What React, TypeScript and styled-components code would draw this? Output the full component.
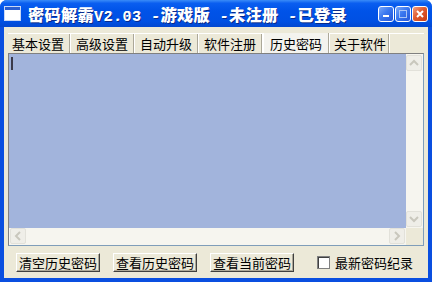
import React from "react";
import styled, { createGlobalStyle } from "styled-components";

const GlobalStyle = createGlobalStyle`
  html, body { margin: 0; padding: 0; background: #ffffff; }
  body { font-family: "Noto Sans CJK SC", "Liberation Sans", sans-serif; }
  * { box-sizing: border-box; }
`;

const Window = styled.div`
  width: 432px;
  height: 282px;
  display: flex;
  flex-direction: column;
  background: #0a4fe0;
  border-radius: 7px 7px 0 0;
  overflow: hidden;
`;

const TitleBar = styled.div`
  height: 27px;
  flex: none;
  display: flex;
  align-items: center;
  padding: 0 4px 0 5px;
  background: linear-gradient(
    to bottom,
    #3a8cf8 0%,
    #0a5ef0 12%,
    #0053e8 40%,
    #0050e3 80%,
    #0348d0 100%
  );
`;

const AppIcon = styled.div`
  width: 15px;
  height: 13px;
  background: #ffffff;
  border-top: 3px solid #2b5fd0;
  box-shadow: 0 0 0 1px #c9d8f5;
  margin-right: 8px;
  flex: none;
`;

const TitleText = styled.div`
  flex: 1;
  color: #ffffff;
  font-family: "Noto Sans CJK SC", "Liberation Mono", serif;
  font-weight: 900;
  font-size: 16px;
  letter-spacing: 0.5px;
  white-space: nowrap;
  text-shadow: 1px 1px 0 #0a2a8a, 0.4px 0 0 #ffffff;
`;

const Latin = styled.span`
  font-family: "Liberation Mono", monospace;
  font-size: 15px;
`;

const CaptionButtons = styled.div`
  display: flex;
  gap: 1px;
`;

const CapBtn = styled.div<{ $close?: boolean }>`
  width: 16px;
  height: 16px;
  border: 1px solid #ffffff;
  border-radius: 3px;
  background: ${(p) =>
    p.$close
      ? "linear-gradient(135deg, #f0a080 0%, #e05a30 45%, #c83c10 100%)"
      : "linear-gradient(135deg, #7aa8f8 0%, #3a78f0 45%, #2456d8 100%)"};
  display: flex;
  align-items: center;
  justify-content: center;
`;

const Frame = styled.div`
  flex: 1;
  display: flex;
  flex-direction: column;
  margin: 0 4px 4px 4px;
  background: #ece9d8;
  padding: 6px 4px 0 4px;
`;

const TabRow = styled.div`
  display: flex;
  height: 20px;
  padding-left: 1px;
  border-top: 1px solid #ffffff;
`;

const Tab = styled.div<{ $active?: boolean }>`
  height: 19px;
  padding: 0 5px;
  display: flex;
  align-items: center;
  font-size: 13px;
  color: #000;
  white-space: nowrap;
  border-right: 1px solid #aca899;
  box-shadow: 1px 0 0 #ffffff;
  margin-right: 1px;
  &:first-child { padding-left: 3px; }
  &:last-child { padding: 0 2px 0 4px; }
  ${(p) =>
    p.$active
      ? `border-left: 1px solid #ffffff; margin-top: -1px; height: 20px; background: #f4f3ee; padding: 0 6px;`
      : ``}
`;

const EditBox = styled.div`
  flex: none;
  height: 193px;
  border: 1px solid #7f9db9;
  border-top-color: #808080;
  border-left-color: #808080;
  display: grid;
  grid-template-columns: 1fr 17px;
  grid-template-rows: 1fr 17px;
  background: #a2b4dc;
`;

const EditArea = styled.div`
  background: #a2b4dc;
  padding: 3px 2px;
`;

const Caret = styled.div`
  width: 2px;
  height: 13px;
  background: #3a3a4a;
`;

const VScroll = styled.div`
  background: #f6f5ef;
  display: flex;
  flex-direction: column;
  justify-content: space-between;
  padding: 1px 0;
`;

const HScroll = styled.div`
  background: #f6f5ef;
  display: flex;
  justify-content: space-between;
  padding: 0 1px;
`;

const Corner = styled.div`
  background: #ece9d8;
`;

const ArrowBtn = styled.div`
  width: 16px;
  height: 16px;
  border: 1px solid #e2e1da;
  border-radius: 2px;
  background: #efeee8;
  display: flex;
  align-items: center;
  justify-content: center;
`;

const BottomBar = styled.div`
  display: flex;
  align-items: center;
  padding: 7px 0 0 8px;
  gap: 13px;
`;

const Button = styled.div`
  height: 19px;
  padding: 0 2px;
  display: flex;
  align-items: center;
  justify-content: center;
  font-size: 13px;
  color: #000;
  background: #ece9d8;
  border-top: 1px solid #ffffff;
  border-left: 1px solid #ffffff;
  border-right: 1px solid #404040;
  border-bottom: 1px solid #404040;
  box-shadow: inset -1px -1px 0 #aca899;
  white-space: nowrap;
`;

const CheckWrap = styled.label`
  display: flex;
  align-items: center;
  gap: 5px;
  margin-left: 10px;
  font-size: 13px;
  color: #000;
`;

const CheckBox = styled.span`
  width: 13px;
  height: 13px;
  background: #ffffff;
  border: 1px solid #808080;
  box-shadow: inset 1px 1px 0 #404040;
`;

const Arrow = ({ dir }: { dir: "up" | "down" | "left" | "right" }) => {
  const paths: Record<string, string> = {
    up: "M3 9 L7 5 L11 9",
    down: "M3 5 L7 9 L11 5",
    left: "M9 3 L5 7 L9 11",
    right: "M5 3 L9 7 L5 11",
  };
  return (
    <svg width="14" height="14" viewBox="0 0 14 14">
      <path d={paths[dir]} fill="none" stroke="#c9c7bd" strokeWidth="2" />
    </svg>
  );
};

export default function App() {
  return (
    <>
      <GlobalStyle />
      <Window>
        <TitleBar>
          <AppIcon />
          <TitleText>
            密码解霸<Latin>V2.03 -</Latin>游戏版<Latin> -</Latin>未注册<Latin> -</Latin>已登录
          </TitleText>
          <CaptionButtons>
            <CapBtn>
              <svg width="10" height="10" viewBox="0 0 10 10">
                <rect x="2" y="6" width="6" height="2" fill="#fff" />
              </svg>
            </CapBtn>
            <CapBtn>
              <svg width="10" height="10" viewBox="0 0 10 10">
                <rect x="1.5" y="1.5" width="7" height="7" fill="none" stroke="#a9c4f5" strokeWidth="1" />
              </svg>
            </CapBtn>
            <CapBtn $close>
              <svg width="10" height="10" viewBox="0 0 10 10">
                <path d="M2 2 L8 8 M8 2 L2 8" stroke="#fff" strokeWidth="2" />
              </svg>
            </CapBtn>
          </CaptionButtons>
        </TitleBar>
        <Frame>
          <TabRow>
            <Tab>基本设置</Tab>
            <Tab>高级设置</Tab>
            <Tab>自动升级</Tab>
            <Tab>软件注册</Tab>
            <Tab $active>历史密码</Tab>
            <Tab>关于软件</Tab>
          </TabRow>
          <EditBox>
            <EditArea>
              <Caret />
            </EditArea>
            <VScroll>
              <ArrowBtn><Arrow dir="up" /></ArrowBtn>
              <ArrowBtn><Arrow dir="down" /></ArrowBtn>
            </VScroll>
            <HScroll>
              <ArrowBtn><Arrow dir="left" /></ArrowBtn>
              <ArrowBtn><Arrow dir="right" /></ArrowBtn>
            </HScroll>
            <Corner />
          </EditBox>
          <BottomBar>
            <Button>清空历史密码</Button>
            <Button>查看历史密码</Button>
            <Button>查看当前密码</Button>
            <CheckWrap>
              <CheckBox />
              最新密码纪录
            </CheckWrap>
          </BottomBar>
        </Frame>
      </Window>
    </>
  );
}
